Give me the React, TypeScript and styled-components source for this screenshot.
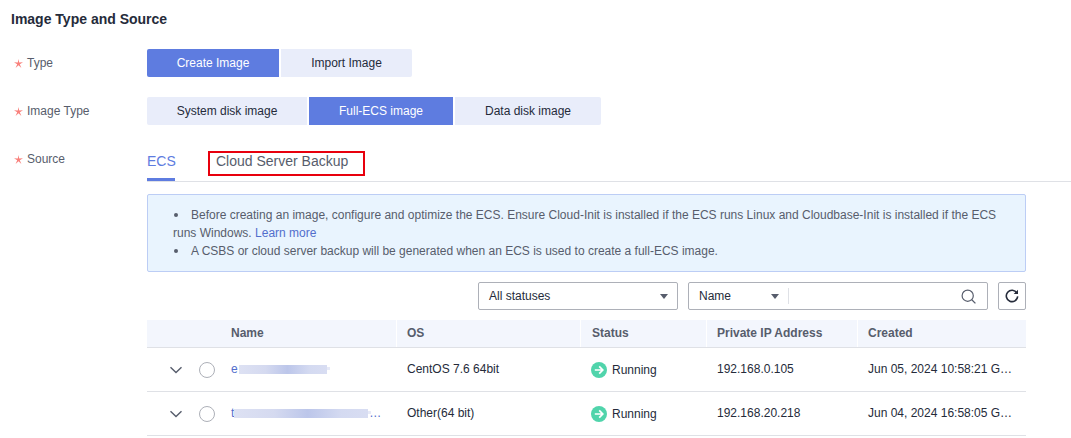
import styled, { createGlobalStyle } from "styled-components";

const GlobalStyle = createGlobalStyle`
  html, body {
    margin: 0;
    padding: 0;
    background: #fff;
  }
  body {
    font: 12px "Liberation Sans", Arial, sans-serif;
    color: #252b3a;
  }
`;

const rows = [
  { prefix: "e", blur: 88, gap: 1, dots: false, os: "CentOS 7.6 64bit", ip: "192.168.0.105", created: "Jun 05, 2024 10:58:21 G…" },
  { prefix: "t", blur: 134, gap: 0, dots: true, os: "Other(64 bit)", ip: "192.168.20.218", created: "Jun 04, 2024 16:58:05 G…" },
];

const RequiredStar = () => (
  <svg width="9" height="9" viewBox="0 0 9 9" fill="#f9817c">
    <path d="M4.5 0 5.2 3.4 9 3.2 5.8 5.2 7.4 9 4.5 6.3 1.6 9 3.2 5.2 0 3.2 3.8 3.4Z" />
  </svg>
);

const Chevron = () => (
  <svg width="14" height="8" viewBox="0 0 14 8" fill="none">
    <path d="M1.5 1.2 7 6.6l5.5-5.4" stroke="#575d6c" strokeWidth="1.4" />
  </svg>
);

const RunningIcon = () => (
  <svg width="16" height="16" viewBox="0 0 16 16" fill="none">
    <circle cx="8" cy="8" r="8" fill="#50d4ab" />
    <path d="M3.8 8h7.8M8.2 4.4 11.8 8l-3.6 3.6" stroke="#fff" strokeWidth="1.7" />
  </svg>
);

const SearchIcon = () => (
  <svg width="15" height="15" viewBox="0 0 15 15" fill="none">
    <circle cx="6.7" cy="6.7" r="5.6" stroke="#575d6c" strokeWidth="1.2" />
    <path d="m10.8 10.8 3.6 3.6" stroke="#575d6c" strokeWidth="1.3" />
  </svg>
);

const RefreshIcon = () => (
  <svg width="14" height="14" viewBox="0 0 14 14" fill="none">
    <path d="M11.9 4A5.7 5.7 0 1 0 12.7 7.4" stroke="#252b3a" strokeWidth="1.6" />
    <path d="M13 .8v4.3H8.7" fill="#252b3a" />
  </svg>
);

export default function App() {
  return (
    <Page>
      <GlobalStyle />
      <Title>Image Type and Source</Title>

      <FormRow>
        <Label>
          <RequiredStar />
          Type
        </Label>
        <ButtonGroup>
          <Choice $active $width={132}>Create Image</Choice>
          <Choice $width={131}>Import Image</Choice>
        </ButtonGroup>
      </FormRow>

      <FormRow>
        <Label>
          <RequiredStar />
          Image Type
        </Label>
        <ButtonGroup>
          <Choice $width={160}>System disk image</Choice>
          <Choice $active $width={144}>Full-ECS image</Choice>
          <Choice $width={146}>Data disk image</Choice>
        </ButtonGroup>
      </FormRow>

      <SourceRow>
        <SourceLabel>
          <RequiredStar />
          Source
        </SourceLabel>
        <SourceBody>
          <Tabs>
            <Tab $active>ECS</Tab>
            <Tab>
              Cloud Server Backup
              <Highlight />
            </Tab>
          </Tabs>

          <Content>
            <Notice>
              <NoticeLine>
                <Bullet />
                Before creating an image, configure and optimize the ECS. Ensure Cloud-Init is installed if the ECS runs Linux and Cloudbase-Init is installed if the ECS
              </NoticeLine>
              <NoticeLine>
                runs Windows. <LearnMore>Learn more</LearnMore>
              </NoticeLine>
              <NoticeLine>
                <Bullet />
                A CSBS or cloud server backup will be generated when an ECS is used to create a full-ECS image.
              </NoticeLine>
            </Notice>

            <Filters>
              <StatusSelect>
                All statuses
                <Caret />
              </StatusSelect>
              <SearchBox>
                <NameSelect>
                  Name
                  <Caret />
                </NameSelect>
                <SearchDivider />
                <SearchButton>
                  <SearchIcon />
                </SearchButton>
              </SearchBox>
              <RefreshButton>
                <RefreshIcon />
              </RefreshButton>
            </Filters>

            <HeaderRow>
              <HeaderCell $first>Name</HeaderCell>
              <HeaderCell>OS</HeaderCell>
              <HeaderCell $wide>Status</HeaderCell>
              <HeaderCell>Private IP Address</HeaderCell>
              <HeaderCell $last>Created</HeaderCell>
            </HeaderRow>

            {rows.map((row) => (
              <BodyRow key={row.ip}>
                <NameCell>
                  <ExpandToggle>
                    <Chevron />
                  </ExpandToggle>
                  <Radio />
                  <NameLink>
                    {row.prefix}
                    <Redacted $width={row.blur} $gap={row.gap} />
                    {row.dots && <Dots>…</Dots>}
                  </NameLink>
                </NameCell>
                <Cell>{row.os}</Cell>
                <StatusCell>
                  <RunningIcon />
                  Running
                </StatusCell>
                <Cell>{row.ip}</Cell>
                <Cell>{row.created}</Cell>
              </BodyRow>
            ))}
          </Content>
        </SourceBody>
      </SourceRow>
    </Page>
  );
}

const Page = styled.div`
  width: 1071px;
  height: 438px;
  overflow: hidden;
  padding-top: 12px;
  box-sizing: border-box;
`;

const Title = styled.div`
  font-size: 14px;
  font-weight: 700;
  line-height: 15px;
  color: #252b3a;
  padding-left: 11px;
`;

const FormRow = styled.div`
  display: flex;
  align-items: center;
  height: 28px;
  margin-top: 20px;
  &:nth-of-type(2) {
    margin-top: 22px;
  }
`;

const Label = styled.div`
  display: flex;
  align-items: center;
  gap: 4px;
  width: 147px;
  box-sizing: border-box;
  padding: 0 0 0 14px;
  color: #575d6c;
  line-height: 14px;
`;

const ButtonGroup = styled.div`
  display: flex;
  gap: 2px;
`;

const Choice = styled.div<{ $active?: boolean; $width: number }>`
  width: ${(p) => p.$width}px;
  height: 28px;
  line-height: 28px;
  text-align: center;
  background: ${(p) => (p.$active ? "#5e7ce0" : "#e9edfa")};
  color: ${(p) => (p.$active ? "#fff" : "#252b3a")};
  &:first-child {
    border-radius: 2px 0 0 2px;
  }
  &:last-child {
    border-radius: 0 2px 2px 0;
  }
`;

const SourceRow = styled.div`
  display: flex;
  margin-top: 20px;
`;

const SourceLabel = styled(Label)`
  padding-top: 4px;
  height: 20px;
  box-sizing: content-box;
  width: 133px;
`;

const SourceBody = styled.div`
  flex: 1;
  min-width: 0;
`;

const Tabs = styled.div`
  display: flex;
  gap: 41px;
  height: 37px;
  box-sizing: border-box;
  border-bottom: 1px solid #dfe1e6;
`;

const Tab = styled.div<{ $active?: boolean }>`
  position: relative;
  font-size: 14px;
  line-height: 18px;
  padding-top: 7px;
  height: 36px;
  box-sizing: border-box;
  width: ${(p) => (p.$active ? "28px" : "auto")};
  color: ${(p) => (p.$active ? "#5e7ce0" : "#575d6c")};
  border-bottom: ${(p) => (p.$active ? "3px solid #5e7ce0" : "none")};
`;

const Highlight = styled.span`
  position: absolute;
  left: -8px;
  top: 6px;
  width: 157px;
  height: 25px;
  box-sizing: border-box;
  border: 2px solid #e8000d;
`;

const Content = styled.div`
  width: 879px;
`;

const Notice = styled.div`
  margin-top: 12px;
  height: 78px;
  box-sizing: border-box;
  padding: 11px 25px 0 25px;
  background: #e9f4fe;
  border: 1px solid #bccdf5;
  border-radius: 2px;
  color: #575d6c;
  line-height: 18px;
`;

const NoticeLine = styled.div`
  white-space: nowrap;
`;

const Bullet = styled.span`
  display: inline-block;
  width: 4px;
  height: 4px;
  border-radius: 50%;
  background: #575d6c;
  margin: 0 13px 2px 1px;
`;

const LearnMore = styled.a`
  color: #526ecc;
`;

const Filters = styled.div`
  display: flex;
  justify-content: flex-end;
  gap: 10px;
  margin-top: 10px;
  height: 28px;
`;

const FieldBox = styled.div`
  display: flex;
  align-items: center;
  height: 28px;
  box-sizing: border-box;
  border: 1px solid #adb0b8;
  border-radius: 2px;
  background: #fff;
`;

const StatusSelect = styled(FieldBox)`
  width: 200px;
  padding: 0 9px 0 10px;
  justify-content: space-between;
`;

const Caret = styled.span`
  width: 0;
  height: 0;
  border-left: 4px solid transparent;
  border-right: 4px solid transparent;
  border-top: 5px solid #575d6c;
`;

const SearchBox = styled(FieldBox)`
  width: 300px;
`;

const NameSelect = styled.div`
  display: flex;
  align-items: center;
  justify-content: space-between;
  width: 92px;
  padding: 0 2px 0 10px;
  box-sizing: border-box;
`;

const SearchDivider = styled.span`
  width: 1px;
  height: 16px;
  background: #dfe1e6;
  margin-left: 7px;
`;

const SearchButton = styled.div`
  margin-left: auto;
  margin-right: 11px;
  display: flex;
`;

const RefreshButton = styled(FieldBox)`
  width: 28px;
  justify-content: center;
`;

const columns = "250px 184px 126px 151px 168px";

const HeaderRow = styled.div`
  display: grid;
  grid-template-columns: ${columns};
  height: 28px;
  margin-top: 10px;
  box-sizing: border-box;
  background: #f3f6fd;
  border-bottom: 1px solid #dfe1e6;
`;

const HeaderCell = styled.div<{ $first?: boolean; $last?: boolean; $wide?: boolean }>`
  font-weight: 700;
  color: #575d6c;
  line-height: 26px;
  padding-left: ${(p) => (p.$first ? "84px" : p.$wide ? "11px" : "10px")};
  border-right: ${(p) => (p.$last ? "none" : "1px solid #fff")};
`;

const BodyRow = styled.div`
  display: grid;
  grid-template-columns: ${columns};
  height: 44px;
  box-sizing: border-box;
  border-bottom: 1px solid #dfe1e6;
`;

const Cell = styled.div`
  display: flex;
  align-items: center;
  padding-left: 10px;
  padding-bottom: 2px;
  white-space: nowrap;
`;

const NameCell = styled(Cell)`
  padding-left: 22px;
  padding-bottom: 0;
`;

const ExpandToggle = styled.div`
  display: flex;
  width: 30px;
`;

const Radio = styled.span`
  width: 16px;
  height: 16px;
  box-sizing: border-box;
  border: 1px solid #adb0b8;
  border-radius: 50%;
`;

const NameLink = styled.div`
  display: flex;
  align-items: center;
  margin-left: 16px;
  margin-bottom: 1px;
  color: #526ecc;
`;

const Redacted = styled.span<{ $width: number; $gap: number }>`
  position: relative;
  display: block;
  width: ${(p) => p.$width}px;
  margin-left: ${(p) => p.$gap}px;
  height: 9px;
  background: linear-gradient(90deg, #dde1f3 0%, #d5daf0 30%, #bcc6ea 55%, #d4daf1 80%, #d8ddf2 100%);
  &::after {
    content: "";
    position: absolute;
    left: 100%;
    top: 2px;
    width: 3px;
    height: 3px;
    background: #e6e9f7;
  }
`;

const Dots = styled.span`
  margin-left: 1px;
`;

const StatusCell = styled(Cell)`
  gap: 5px;
  padding-bottom: 0;
`;
